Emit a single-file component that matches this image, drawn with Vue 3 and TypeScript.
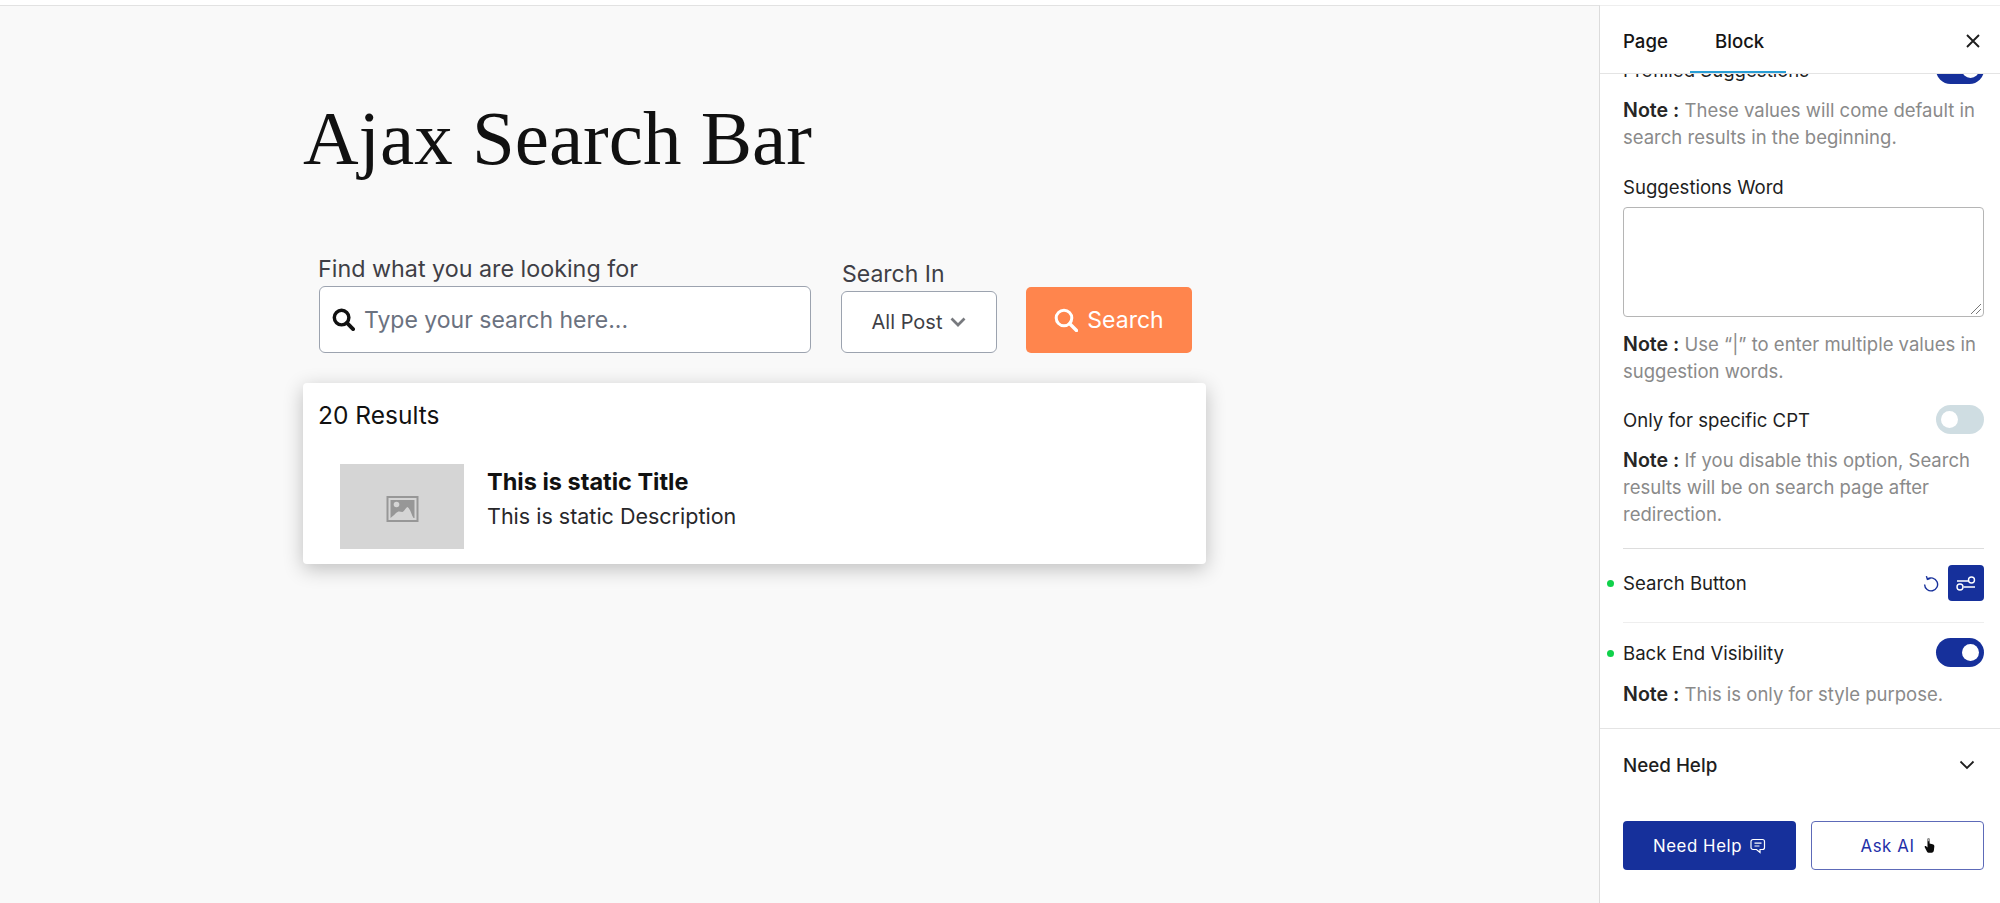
<script setup lang="ts">
const title = 'Ajax Search Bar'
</script>

<template>
  <div class="page">
    <main class="canvas">
      <h1 class="title">{{ title }}</h1>
      <form class="search" @submit.prevent>
        <div class="field field-text">
          <label class="label">Find what you are looking for</label>
          <div class="input">
            <svg class="lens" viewBox="0 0 24 24" width="23" height="23"><circle cx="10" cy="10" r="7.6" fill="none" stroke="#111" stroke-width="3.6"/><path d="M15.6 15.6 22 22" stroke="#111" stroke-width="4" stroke-linecap="round"/></svg>
            <span class="placeholder">Type your search here...</span>
          </div>
        </div>
        <div class="field field-select">
          <label class="label">Search In</label>
          <div class="select">
            <span>All Post</span>
            <svg viewBox="0 0 16 10" width="16" height="10"><path d="M1.5 1.5 8 8l6.5-6.5" fill="none" stroke="#77797e" stroke-width="2.7"/></svg>
          </div>
        </div>
        <button class="go" type="button">
          <svg viewBox="0 0 24 24" width="24" height="24"><circle cx="10" cy="10" r="7.8" fill="none" stroke="#fff" stroke-width="3"/><path d="M15.8 15.8 22.5 22.5" stroke="#fff" stroke-width="3.4" stroke-linecap="round"/></svg>
          <span>Search</span>
        </button>
      </form>
      <section class="results">
        <div class="count">20 Results</div>
        <article class="result">
          <div class="thumb">
            <svg viewBox="0 0 32 26" width="33" height="26"><rect x="1" y="1" width="30" height="24" fill="none" stroke="#979797" stroke-width="2"/><path d="M4 4h24v18h-1c-2-3-3-9-6-11-2 1-3 4-5 5-2 0-3-1-5 0-2 1-4 4-7 6z" fill="#979797"/><circle cx="10" cy="8.5" r="2.8" fill="#d5d5d5"/></svg>
          </div>
          <div class="result-text">
            <div class="result-title">This is static Title</div>
            <div class="result-desc">This is static Description</div>
          </div>
        </article>
      </section>
    </main>

    <aside class="panel">
      <header class="tabs">
        <span class="tab tab-page">Page</span>
        <span class="tab tab-block">Block<i class="tab-line"></i></span>
        <svg class="close" viewBox="0 0 16 16" width="16" height="16"><path d="M2 2l12 12M14 2 2 14" stroke="#1e1e1e" stroke-width="1.9"/></svg>
      </header>

      <div class="scroll">
        <div class="clipped">
          <span class="row-label">Prefilled Suggestions</span>
          <span class="toggle on"><i></i></span>
        </div>
        <p class="note n1"><b>Note :</b> These values will come default in search results in the beginning.</p>
        <div class="row-label word">Suggestions Word</div>
        <div class="textarea">
          <svg viewBox="0 0 12 12" width="12" height="12"><path d="M1 11 11 1M6 11l5-5" stroke="#777" stroke-width="1"/></svg>
        </div>
        <p class="note n2"><b>Note :</b> Use “|” to enter multiple values in suggestion words.</p>
        <div class="row cpt">
          <span class="row-label">Only for specific CPT</span>
          <span class="toggle off"><i></i></span>
        </div>
        <p class="note n3"><b>Note :</b> If you disable this option, Search results will be on search page after redirection.</p>
        <div class="row button-row">
          <span class="row-label dotted">Search Button</span>
          <div class="tools">
            <svg viewBox="0 0 16 17" width="16" height="18"><path d="M4.300 4.600A6.500 6.500 0 1 1 1.600 10" fill="none" stroke="#17309b" stroke-width="1.400"/><path d="M3.400 1.600 4.400 4.800 7.500 3.900" fill="none" stroke="#17309b" stroke-width="1.400"/></svg>
            <span class="tool-btn">
              <svg viewBox="0 0 20 15" width="20" height="15"><path d="M1 5h11.500M7.500 11h11.500" stroke="#fff" stroke-width="1.400"/><circle cx="15.500" cy="4" r="3" fill="none" stroke="#fff" stroke-width="1.400"/><circle cx="4" cy="11" r="3" fill="none" stroke="#fff" stroke-width="1.400"/></svg>
            </span>
          </div>
        </div>
        <div class="row visibility">
          <span class="row-label dotted">Back End Visibility</span>
          <span class="toggle on"><i></i></span>
        </div>
        <p class="note n4"><b>Note :</b> This is only for style purpose.</p>
      </div>

      <section class="help">
        <div class="help-head">
          <span>Need Help</span>
          <svg viewBox="0 0 16 10" width="16" height="10"><path d="M1.500 1.500 8 8l6.500-6.500" fill="none" stroke="#1e1e1e" stroke-width="1.800"/></svg>
        </div>
        <div class="help-actions">
          <button class="btn primary" type="button">
            <span>Need Help</span>
            <svg viewBox="0 0 16 16" width="16" height="16"><path d="M3.500 1.500h9a2 2 0 0 1 2 2v6a2 2 0 0 1-2 2h-2.500v3l-3.500-3h-3.500a2 2 0 0 1-2-2v-6a2 2 0 0 1 2-2zM4.500 5.200h7M4.500 8h5" fill="none" stroke="#fff" stroke-width="1.200"/></svg>
          </button>
          <button class="btn outline" type="button">
            <span>Ask AI</span>
            <svg viewBox="0 0 12 18" width="11" height="17"><path d="M3.800 2.400c0-1.700 2.300-1.700 2.300 0v4.300l3.200.8c1.300.4 2 1 2 2.300l-.5 4.500c-.2 1.500-1 2.700-2.500 2.700H5.500c-1 0-1.700-.5-2.200-1.300L.8 11c-.6-1.100.7-2 1.600-1.100l1.400 1.200z" fill="#0b0b0b"/><path d="M3.800 2.400c0-1.700 2.300-1.700 2.300 0v2H3.800z" fill="#a8a8a8"/></svg>
          </button>
        </div>
      </section>
    </aside>
  </div>
</template>

<style>
html, body { margin: 0; background: #fff; }
</style>

<style scoped>
* { box-sizing: border-box; }
.page {
  display: flex;
  width: 2000px;
  height: 903px;
  overflow: hidden;
  padding-top: 5px;
  background: #fff;
  font-family: Inter, "Liberation Sans", sans-serif;
  color: #111;
}
.canvas {
  flex: 1;
  border-top: 1px solid #e2e2e2;
  border-right: 1px solid #dcdcdc;
  background: #f9f9f9;
  padding: 0 0 0 303px;
}
.title {
  margin: 83px 0 0;
  height: 98px;
  font-family: "Liberation Serif", serif;
  font-weight: 400;
  font-size: 77px;
  line-height: 98px;
  color: #111;
}
.search { display: flex; align-items: flex-end; margin: 68px 0 0 14px; width: 875px; }
.label { display: block; font-size: 23.300px; line-height: 26px; color: #3f3f46; white-space: nowrap; }
.field-text { width: 494px; }
.field-text .label { margin-left: 1px; transform: translateY(1px); }
.input {
  display: flex;
  align-items: center;
  gap: 9px;
  height: 67px;
  margin: 5px 0 0 2px;
  padding: 0 12px;
  background: #fff;
  border: 1px solid #9ca3af;
  border-radius: 6px;
}
.lens { flex: none; }
.placeholder { font-size: 23px; color: #6b7280; }
.field-select { width: 156px; margin-left: 30px; }
.field-select .label { margin-left: 1px; font-size: 23px; }
.select {
  display: flex;
  align-items: center;
  justify-content: center;
  gap: 8px;
  height: 62px;
  margin-top: 4px;
  background: #fff;
  border: 1px solid #9ca3af;
  border-radius: 6px;
  font-size: 20px;
  color: #3f3f46;
}
.go {
  display: flex;
  align-items: center;
  justify-content: center;
  gap: 9px;
  width: 166px;
  height: 66px;
  margin-left: 29px;
  padding: 0;
  border: 0;
  border-radius: 5px;
  background: #ff854d;
  color: #fff;
  font: 400 23px Inter, sans-serif;
}
.results {
  width: 903px;
  height: 181px;
  margin-top: 30px;
  padding: 18px 15px 0;
  background: #fff;
  border-radius: 4px;
  box-shadow: 0 5px 20px rgba(0, 0, 0, .24);
}
.count { font-size: 24.500px; line-height: 29px; }
.result { display: flex; align-items: flex-start; gap: 23px; margin: 34px 0 0 22px; }
.thumb {
  display: flex;
  align-items: center;
  justify-content: center;
  width: 124px;
  height: 85px;
  padding-top: 4px;
  background: #d5d5d5;
}
.result-text { display: flex; flex-direction: column; margin-top: 4px; }
.result-title { font-size: 23.500px; font-weight: 700; line-height: 28px; }
.result-desc { font-size: 21.500px; line-height: 26px; margin-top: 7px; color: #27272a; }

.panel { display: flex; flex-direction: column; width: 400px; background: #fff; border-top: 1px solid #eee; }
.tabs {
  position: relative;
  display: flex;
  align-items: center;
  flex: none;
  height: 68px;
  padding: 3px 19px 0 23px;
  border-bottom: 1px solid #e4e4e4;
  background: #fff;
}
.tab { font-size: 18.600px; font-weight: 500; color: #151515; }
.tab-page { width: 92px; }
.tab-block { position: relative; }
.tab-line { position: absolute; left: -25px; bottom: -21px; width: 96px; height: 2px; background: #2a9fd6; }
.close { margin-left: auto; }
.scroll { flex: none; padding: 0 16px 0 23px; }
.clipped {
  display: flex;
  justify-content: space-between;
  align-items: flex-end;
  height: 10px;
  overflow: hidden;
}
.clipped .row-label { margin-bottom: 4px; line-height: 20px; flex: none; }
.row-label { font-size: 18.600px; line-height: 22px; color: #1e1e1e; }
.note { margin: 0; font-size: 18.500px; line-height: 27px; color: #8a8a8a; }
.note b { font-weight: 600; color: #262626; font-size: 19.600px; }
.n1 { margin-top: 13px; }
.word { margin-top: 25px; }
.textarea {
  display: flex;
  align-items: flex-end;
  justify-content: flex-end;
  height: 110px;
  margin-top: 9px;
  border: 1px solid #b5b5b5;
  border-radius: 4px;
  padding: 0 1px 1px 0;
}
.n2 { margin-top: 14px; }
.row { display: flex; align-items: center; justify-content: space-between; }
.cpt { margin-top: 20px; height: 29px; }
.toggle { position: relative; display: block; flex: none; width: 48px; height: 29px; border-radius: 15px; }
.toggle.on { background: #16309b; }
.toggle.off { background: #cfdde2; }
.toggle i { position: absolute; top: 6px; width: 17px; height: 17px; border-radius: 50%; background: #fff; }
.toggle.on i { right: 5px; }
.toggle.off i { left: 5px; }
.n3 { margin-top: 13px; padding-bottom: 20px; border-bottom: 1px solid #ddd; }
.button-row {
  height: 74px;
  padding-bottom: 5px;
  border-bottom: 1px solid #eee;
}
.dotted { position: relative; }
.dotted::before {
  content: "";
  position: absolute;
  left: -16px;
  top: 8px;
  width: 7px;
  height: 7px;
  border-radius: 50%;
  background: #0fd14a;
}
.tools { display: flex; align-items: center; gap: 9px; }
.tool-btn {
  display: flex;
  align-items: center;
  justify-content: center;
  width: 36px;
  height: 36px;
  border-radius: 4px;
  background: #16309b;
}
.visibility { margin-top: 15px; height: 29px; }
.n4 { margin-top: 14px; }
.help { margin-top: 20px; border-top: 1px solid #e4e4e4; padding: 0 16px 0 23px; }
.help-head {
  display: flex;
  align-items: center;
  justify-content: space-between;
  height: 72px;
  padding-right: 9px;
  font-size: 18.800px;
  font-weight: 500;
  color: #1e1e1e;
}
.help-actions { display: flex; justify-content: space-between; margin-top: 20px; }
.btn {
  display: flex;
  align-items: center;
  justify-content: center;
  gap: 8px;
  width: 173px;
  height: 49px;
  padding: 0;
  border-radius: 4px;
  font: 400 16.800px Inter, sans-serif;
  letter-spacing: .6px;
}
.primary { background: #16309b; border: 0; color: #fff; }
.outline { background: #fff; border: 1px solid #5d6ab8; color: #1f2fa8; gap: 9px; }
</style>
